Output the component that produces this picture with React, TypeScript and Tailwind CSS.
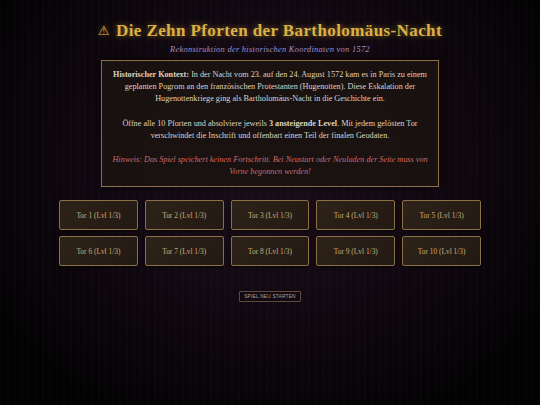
const gates = Array.from({ length: 10 }, (_, i) => i + 1);

export default function App() {
  return (
    <div className="relative min-h-[405px] w-full overflow-hidden bg-[radial-gradient(ellipse_60%_70%_at_50%_40%,#1d0f1b_0%,#100810_55%,#030203_100%)] font-['Liberation_Serif',serif] text-[#ddd3c3]">
      {/* faint vertical stripes */}
      <div className="pointer-events-none absolute inset-0 bg-[repeating-linear-gradient(90deg,rgba(255,255,255,0.012)_0px,rgba(255,255,255,0.012)_2px,transparent_2px,transparent_7px)]" />
      <div className="relative flex flex-col items-center pt-[20px]">
        <h1 className="flex items-center gap-[6px] text-[17px] font-bold leading-[22px] tracking-[0.4px] text-[#dcb044] [text-shadow:0_0_6px_rgba(226,179,65,0.55)]">
          <span className="font-['DejaVu_Sans',sans-serif] text-[13px] font-normal">⚠</span>
          <span>Die Zehn Pforten der Bartholomäus-Nacht</span>
        </h1>
        <p className="mt-[3px] text-[8.4px] italic leading-[10px] tracking-[0.3px] text-[#a894c8]">
          Rekonstruktion der historischen Koordinaten von 1572
        </p>

        <div className="mt-[5px] w-[338px] border border-[#8b7048] bg-[#1a1311]/90 px-[6px] pb-[8px] pt-[8px] text-center text-[8.2px] leading-[12.2px] shadow-[0_0_10px_rgba(0,0,0,0.7)]">
          <p>
            <b>Historischer Kontext:</b> In der Nacht vom 23. auf den 24. August 1572 kam es in Paris zu einem
            <br />
            geplanten Pogrom an den französischen Protestanten (Hugenotten). Diese Eskalation der
            <br />
            Hugenottenkriege ging als Bartholomäus-Nacht in die Geschichte ein.
          </p>
          <p className="mt-[12px]">
            Öffne alle 10 Pforten und absolviere jeweils <b>3 ansteigende Level</b>. Mit jedem gelösten Tor
            <br />
            verschwindet die Inschrift und offenbart einen Teil der finalen Geodaten.
          </p>
          <p className="mt-[12px] italic text-[#d06868]">
            Hinweis: Das Spiel speichert keinen Fortschritt. Bei Neustart oder Neuladen der Seite muss von
            <br />
            Vorne begonnen werden!
          </p>
        </div>

        <div className="mt-[13px] grid w-[422px] grid-cols-5 gap-x-[7px] gap-y-[6px]">
          {gates.map((n) => (
            <button
              key={n}
              className="flex h-[30px] items-center justify-center rounded-[2px] border border-[#8b7048] bg-[linear-gradient(135deg,#2e2318,#221913)] text-[7.4px] font-medium text-[#c9ae78] shadow-[0_1px_3px_rgba(0,0,0,0.6)]"
            >
              Tor {n} (Lvl 1/3)
            </button>
          ))}
        </div>

        <button className="mt-[25px] rounded-[1px] border border-[#5e4a3a] px-[4px] py-[1px] font-['Liberation_Sans',sans-serif] text-[4.8px] leading-[7px] tracking-[0.2px] text-[#b9a48a] uppercase">
          Spiel neu starten
        </button>
      </div>
    </div>
  );
}
